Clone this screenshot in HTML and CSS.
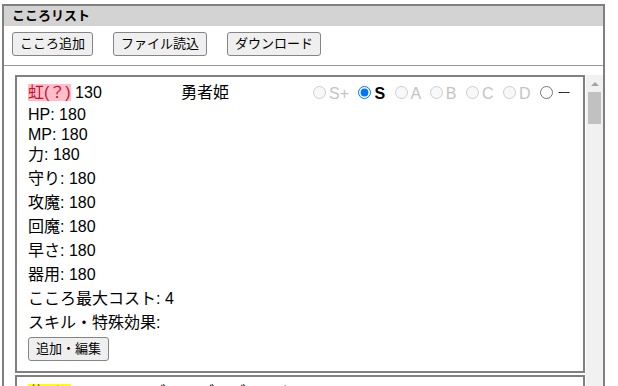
FILE: index.html
```html
<!DOCTYPE html>
<html lang="ja">
<head>
<meta charset="utf-8">
<title>こころリスト</title>
<link rel="stylesheet" href="styles.css">
</head>
<body>
<div class="panel">
  <div class="panel-title">こころリスト</div>
  <div class="toolbar">
    <button class="btn">こころ追加</button>
    <button class="btn wide">ファイル読込</button>
    <button class="btn wide">ダウンロード</button>
  </div>
  <div class="list-wrap">
    <div class="list">
      <div class="card">
        <div class="head">
          <div class="name"><span class="tag rainbow">虹(？)</span> 130</div>
          <div class="title">勇者姫</div>
          <div class="ranks">
            <label class="rank off"><input type="radio" name="r1" disabled>S+</label>
            <label class="rank on"><input type="radio" name="r1" checked>S</label>
            <label class="rank off"><input type="radio" name="r1" disabled>A</label>
            <label class="rank off"><input type="radio" name="r1" disabled>B</label>
            <label class="rank off"><input type="radio" name="r1" disabled>C</label>
            <label class="rank off"><input type="radio" name="r1" disabled>D</label>
            <label class="rank"><input type="radio" name="r1"><span class="dash">ー</span></label>
          </div>
        </div>
        <div class="main-stats">
          <div class="line">HP: 180</div>
          <div class="line">MP: 180</div>
          <div class="line">力: 180</div>
        </div>
        <div class="line stat">守り: 180</div>
        <div class="line stat">攻魔: 180</div>
        <div class="line stat">回魔: 180</div>
        <div class="line stat">早さ: 180</div>
        <div class="line stat">器用: 180</div>
        <div class="line stat">こころ最大コスト: 4</div>
        <div class="line stat">スキル・特殊効果:</div>
        <button class="btn edit">追加・編集</button>
      </div>
      <div class="card">
        <div class="head">
          <div class="name short"><span class="tag yellow">黄(？)</span> 120</div>
          <div class="title">ゴールデンゴーレム</div>
          <div class="ranks">
            <label class="rank off"><input type="radio" name="r2" disabled>S+</label>
            <label class="rank off"><input type="radio" name="r2" disabled>S</label>
            <label class="rank on"><input type="radio" name="r2" checked>A</label>
          </div>
        </div>
        <div class="main-stats">
          <div class="line">HP: 150</div>
          <div class="line">MP: 120</div>
        </div>
      </div>
    </div>
    <div class="scrollbar">
      <div class="sb-up"><span class="sb-arrow"></span></div>
      <div class="sb-thumb"></div>
    </div>
  </div>
</div>
</body>
</html>
```

FILE: styles.css
```css
html, body {
  margin: 0;
  padding: 0;
  background: #ffffff;
  overflow: hidden;
}

body {
  font-family: "Liberation Sans", "Noto Sans CJK JP", sans-serif;
  color: #000000;
}

.panel {
  margin: 4px 0 0 2px;
  width: 603px;
  height: 440px;
  box-sizing: border-box;
  border: 2px solid #808080;
  display: flex;
  flex-direction: column;
}

.panel-title {
  height: 20px;
  line-height: 20px;
  background: #d3d3d3;
  font-size: 13px;
  font-weight: bold;
  padding-left: 8px;
}

.toolbar {
  display: flex;
  gap: 20px;
  padding: 6px 8px 9px 8px;
  border-bottom: 1px solid #9a9a9a;
}

.btn {
  height: 24px;
  padding: 0 7px;
  font-family: "Liberation Sans", "Noto Sans CJK JP", sans-serif;
  font-size: 13px;
  line-height: 22px;
  color: #000000;
  background: #efefef;
  border: 1px solid #858585;
  border-radius: 3px;
  margin: 0;
}

.list-wrap {
  margin-top: 9px;
  flex: 1;
  display: flex;
  overflow: hidden;
}

.list {
  flex: 1;
  overflow: hidden;
}

.card {
  margin-left: 11px;
  width: 570px;
  box-sizing: border-box;
  border: 2px solid #808080;
  padding: 6px 11px 10px 11px;
  margin-bottom: 2px;
  font-size: 16px;
}

.head {
  display: flex;
  height: 20px;
  line-height: 20px;
  white-space: nowrap;
}

.name {
  width: 153px;
}

.name.short {
  width: 122px;
}

.title {
  width: 127px;
}

.tag.rainbow {
  background: #ffbfca;
  color: #c8102e;
}

.tag.yellow {
  background: #ffff00;
  color: #7a6400;
}

.ranks {
  white-space: nowrap;
}

.rank input {
  margin: 3px 3px 0 5px;
}

.rank.off {
  color: #c4c4c4;
}

.rank.on {
  font-weight: bold;
}

.dash {
  display: inline-block;
  transform: scaleX(0.85);
  font-weight: 300;
}

.line {
  height: 20px;
  line-height: 20px;
}

.main-stats {
  margin-top: 2px;
}

.stat {
  margin-top: 4px;
}

.btn.edit {
  display: block;
  margin-top: 4px;
}

.scrollbar {
  width: 17px;
  background: #f1f1f1;
  display: flex;
  flex-direction: column;
  align-items: center;
}

.sb-up {
  height: 17px;
  width: 17px;
  display: flex;
  align-items: center;
  justify-content: center;
}

.sb-arrow {
  width: 0;
  height: 0;
  border-left: 4px solid transparent;
  border-right: 4px solid transparent;
  border-bottom: 4px solid #a3a3a3;
}

.sb-thumb {
  width: 13px;
  height: 32px;
  background: #c1c1c1;
}
```
